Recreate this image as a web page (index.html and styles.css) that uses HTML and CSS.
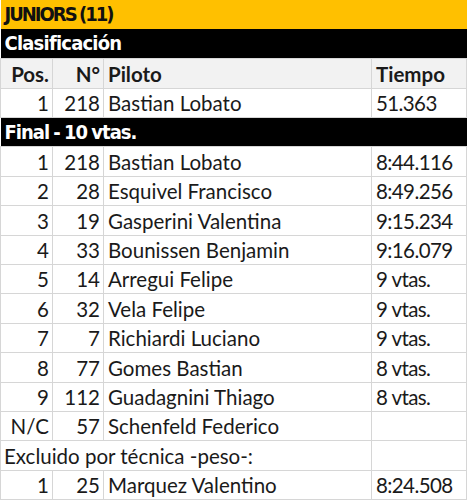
FILE: index.html
```html
<!DOCTYPE html>
<html lang="es">
<head>
<meta charset="utf-8">
<title>Juniors (11)</title>
<link rel="stylesheet" href="styles.css">
</head>
<body>
<table class="grid">
  <colgroup>
    <col class="c-pos"><col class="c-num"><col class="c-name"><col class="c-time">
  </colgroup>
  <tbody>
    <tr class="band band-yellow"><td colspan="4">JUNIORS (11)</td></tr>
    <tr class="band band-black"><td colspan="4">Clasificación</td></tr>
    <tr class="head"><td class="r">Pos.</td><td class="r">N°</td><td>Piloto</td><td>Tiempo</td></tr>
    <tr><td class="r">1</td><td class="r">218</td><td>Bastian Lobato</td><td class="t">51.363</td></tr>
    <tr class="band band-black"><td colspan="4" class="tight">Final - 10 vtas.</td></tr>
    <tr><td class="r">1</td><td class="r">218</td><td>Bastian Lobato</td><td class="t">8:44.116</td></tr>
    <tr><td class="r">2</td><td class="r">28</td><td>Esquivel Francisco</td><td class="t">8:49.256</td></tr>
    <tr><td class="r">3</td><td class="r">19</td><td>Gasperini Valentina</td><td class="t">9:15.234</td></tr>
    <tr><td class="r">4</td><td class="r">33</td><td>Bounissen Benjamin</td><td class="t">9:16.079</td></tr>
    <tr><td class="r">5</td><td class="r">14</td><td>Arregui Felipe</td><td class="t">9 vtas.</td></tr>
    <tr><td class="r">6</td><td class="r">32</td><td>Vela Felipe</td><td class="t">9 vtas.</td></tr>
    <tr><td class="r">7</td><td class="r">7</td><td>Richiardi Luciano</td><td class="t">9 vtas.</td></tr>
    <tr><td class="r">8</td><td class="r">77</td><td>Gomes Bastian</td><td class="t">8 vtas.</td></tr>
    <tr><td class="r">9</td><td class="r">112</td><td>Guadagnini Thiago</td><td class="t">8 vtas.</td></tr>
    <tr><td class="r">N/C</td><td class="r">57</td><td>Schenfeld Federico</td><td></td></tr>
    <tr><td colspan="3" class="span">Excluido por técnica -peso-:</td><td></td></tr>
    <tr><td class="r">1</td><td class="r">25</td><td>Marquez Valentino</td><td class="t">8:24.508</td></tr>
  </tbody>
</table>
</body>
</html>
```

FILE: styles.css
```css
html, body {
  margin: 0;
  padding: 0;
  background: #ffffff;
}
.grid {
  width: 466px;
  table-layout: fixed;
  border-collapse: collapse;
  font-family: Lato, "Open Sans", sans-serif;
  font-size: 20.5px;
  color: #1a1a1a;
}
.c-pos { width: 52px; }
.c-num { width: 51px; }
.c-name { width: 268px; }
.c-time { width: 95px; }
.grid tr { height: 29.4px; }
.grid td {
  border: 1px solid #d6d6d6;
  padding: 0 3px 0 4px;
  white-space: nowrap;
  overflow: hidden;
  vertical-align: bottom;
  line-height: 27px;
}
.grid td.r { text-align: right; }
.grid td.t { letter-spacing: -0.6px; }
.grid td.span { padding-left: 3px; }
.head td {
  background: #f2f2f2;
  font-weight: 700;
}
.band td {
  border: none;
  padding-left: 4px;
  font-family: "DejaVu Sans", sans-serif;
  font-stretch: condensed;
  font-weight: 700;
  vertical-align: middle;
}
.band-yellow td {
  background: #ffc000;
  color: #111111;
  font-size: 20px;
  letter-spacing: -2px;
  word-spacing: -1px;
}
.band-black td {
  background: #000000;
  color: #ffffff;
  font-size: 20px;
  letter-spacing: -0.8px;
}
.band-black td.tight {
  letter-spacing: -1px;
  word-spacing: -1px;
}
```
